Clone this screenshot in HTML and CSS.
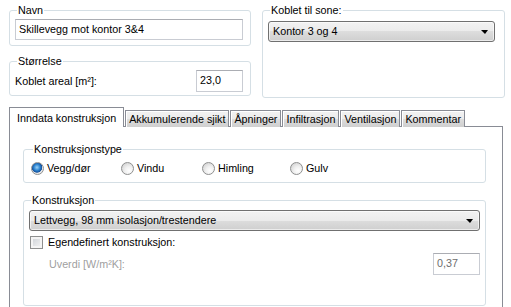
FILE: index.html
```html
<!DOCTYPE html>
<html lang="no">
<head>
    <meta charset="UTF-8">
    <title>Skillevegg</title>
    <link rel="stylesheet" href="styles.css">
</head>
<body>

    <div class="top">
        <div class="leftCol">
            <fieldset class="group navnGroup">
                <legend>Navn</legend>
                <div class="textbox">Skillevegg mot kontor 3&amp;4</div>
            </fieldset>

            <fieldset class="group sizeGroup">
                <legend>Størrelse</legend>
                <div class="row">
                    <span>Koblet areal [m²]:</span>
                    <div class="textbox num">23,0</div>
                </div>
            </fieldset>
        </div>

        <fieldset class="group zoneGroup">
            <legend>Koblet til sone:</legend>
            <div class="combo">Kontor 3 og 4<span class="arrow"></span></div>
        </fieldset>
    </div>

    <div class="tabs">
        <div class="tab selected">Inndata konstruksjon</div>
        <div class="tab">Akkumulerende sjikt</div>
        <div class="tab">Åpninger</div>
        <div class="tab">Infiltrasjon</div>
        <div class="tab">Ventilasjon</div>
        <div class="tab">Kommentar</div>
    </div>

    <div class="panel">
        <fieldset class="group typeGroup">
            <legend>Konstruksjonstype</legend>
            <div class="radios">
                <label class="option"><span class="radio checked"></span>Vegg/dør</label>
                <label class="option"><span class="radio"></span>Vindu</label>
                <label class="option"><span class="radio"></span>Himling</label>
                <label class="option"><span class="radio"></span>Gulv</label>
            </div>
        </fieldset>

        <fieldset class="group constrGroup">
            <legend>Konstruksjon</legend>
            <div class="combo">Lettvegg, 98 mm isolasjon/trestendere<span class="arrow"></span></div>
            <label class="option checkRow"><span class="checkbox"></span>Egendefinert konstruksjon:</label>
            <div class="row uRow">
                <span class="disabled">Uverdi [W/m²K]:</span>
                <div class="textbox num disabledBox">0,37</div>
            </div>
        </fieldset>
    </div>

</body>
</html>
```

FILE: styles.css
```css
body {
    margin:             0;
    padding:            4px 6px 0 9px;
    background-color:   #fff;
    color:              #000;
    font-family:        "Liberation Sans", Arial, sans-serif;
    font-size:          10.75px;
    line-height:        13px;
    overflow:           hidden;
}

/* group boxes */
.group {
    margin:             0;
    padding:            0 7px 0 5px;
    border:             1px solid #d5dfe5;
    border-radius:      3px;
    min-width:          0;
}

.group legend {
    margin-left:        2px;
    padding:            0 1px;
    line-height:        13px;
}

.top {
    display:            grid;
    grid-template-columns: 242px 243px;
    column-gap:         11px;
    align-items:        start;
}

.leftCol {
    display:            flex;
    flex-direction:     column;
    gap:                9px;
}

.navnGroup              { padding-top: 2px; padding-bottom: 5px; }
.sizeGroup              { padding-bottom: 3px; }
.sizeGroup .row         { margin-top: 2px; }
.zoneGroup              { padding: 4px 9px 55px 5px; }

.row {
    display:            flex;
    align-items:        center;
    justify-content:    space-between;
}

/* inputs */
.textbox {
    height:             21px;
    box-sizing:         border-box;
    padding:            3px 3px 0 3px;
    border:             1px solid #c9ccd3;
    border-top-color:   #abadb3;
    background:         #fff;
    white-space:        nowrap;
}

.num                    { width: 47px; height: 22px; }

.combo {
    position:           relative;
    height:             21px;
    box-sizing:         border-box;
    padding:            3px 4px 0 4px;
    border:             1px solid #707070;
    border-radius:      3px;
    background:         linear-gradient(#f2f2f2 0%, #ebebeb 50%, #dddddd 50%, #cfcfcf 100%);
    box-shadow:         inset 0 0 0 1px rgba(255, 255, 255, 0.6);
}

.arrow {
    position:           absolute;
    right:              6px;
    top:                8px;
    border-left:        4px solid transparent;
    border-right:       3px solid transparent;
    border-top:         4px solid #000;
}

/* tabs */
.tabs {
    display:            flex;
    align-items:        flex-end;
    margin-top:         9px;
    height:             20px;
    position:           relative;
    z-index:            1;
}

.tab {
    height:             17px;
    box-sizing:         border-box;
    padding:            2px 3px 0 3px;
    margin-right:       1px;
    border:             1px solid #898c95;
    border-bottom:      none;
    background:         linear-gradient(#f2f2f2, #ebebeb 50%, #dddddd 50%, #cfcfcf);
    box-shadow:         inset 1px 1px 0 #fff;
    white-space:        nowrap;
}

.tab.selected {
    height:             20px;
    padding:            4px 7px 0 7px;
    background:         #fff;
    box-shadow:         none;
}

.panel {
    margin-right:       2px;
    height:             166px;
    padding:            16px 16px 0 13px;
    border:             1px solid #898c95;
    margin-top:         -1px;
}

.typeGroup              { padding-bottom: 7px; padding-left: 7px; }
.constrGroup {
    margin-top:         11px;
    padding:            3px 5px 30px 5px;
}

.radios {
    display:            grid;
    grid-template-columns: 90px 81px 88px auto;
    margin-top:         6px;
}

.option {
    display:            flex;
    align-items:        center;
    gap:                3px;
    height:             13px;
}

.radio {
    width:              13px;
    height:             13px;
    box-sizing:         border-box;
    border:             1px solid #8e8f8f;
    border-radius:      50%;
    background:         radial-gradient(circle at 65% 70%, #ffffff 0%, #f0f0f0 40%, #c8c8c8 100%);
}

.radio.checked {
    background:         radial-gradient(circle at 45% 40%, #9bd3f8 0%, #2b82cf 35%, #17529c 55%, #e6e6e6 62%, #f8f8f8 100%);
}

.checkbox {
    width:              13px;
    height:             13px;
    box-sizing:         border-box;
    border:             1px solid #8e8f8f;
    background:         linear-gradient(135deg, #cbcfd5, #f6f6f6);
    box-shadow:         inset 0 0 0 2px #f4f4f4;
}

.checkRow               { margin-top: 5px; gap: 5px; padding-left: 1px; }
.uRow                   { margin-top: 4px; padding-left: 20px; }
.disabled               { color: #a0a0a0; }
.disabledBox            { color: #6d6d6d; border-color: #c9ccd3; border-top-color: #abadb3; }
```
